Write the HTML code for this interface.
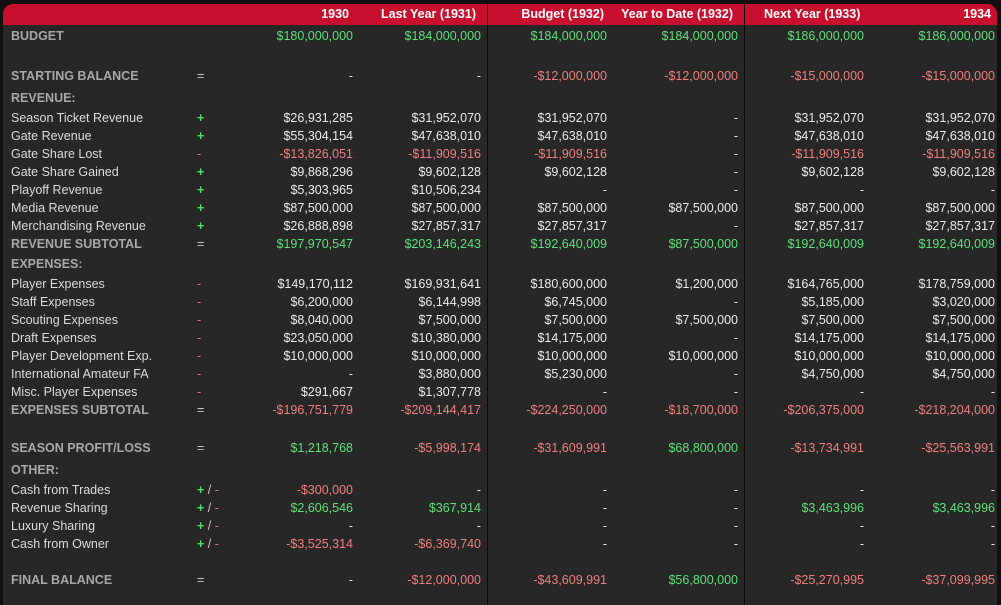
<!DOCTYPE html>
<html><head><meta charset="utf-8"><style>
body{margin:0;width:1001px;height:605px;background:#111;overflow:hidden;font-family:"Liberation Sans",Arial,sans-serif;font-size:12.5px;}
#p{position:absolute;left:3px;top:4px;width:994px;height:601px;background:#272727;border-radius:10px 10px 0 0;overflow:hidden}
#h{position:absolute;left:0;top:0;width:994px;height:21px;background:#c8102e}
.vl{position:absolute;top:0;width:1px;height:601px;background:#0a0a0a}
.r{position:absolute;left:0;width:994px;height:16px;line-height:16px;margin-top:1px}
.r span{position:absolute;white-space:nowrap}
.l{left:8px;color:#dcdcdc}
.b{font-weight:bold;color:#a8a8a8}
.s{left:194px;color:#ccc}
.s .p{position:static;color:#4fe06a;font-weight:bold}
.s .m{position:static;color:#e07a7a}
.c1,.c2,.c3,.c4,.c5,.c6{text-align:right;color:#ececec}
.c1{right:644px}.c2{right:516px}.c3{right:390px}.c4{right:259px}.c5{right:133px}.c6{right:2px}
.g{color:#5ee07a!important}.x{color:#f07e7e!important}
.hd{color:#fff!important;font-weight:bold;font-size:12.5px}
</style></head><body><div id="p">
<div id="h"></div>
<div class="vl" style="left:484px"></div><div class="vl" style="left:741px"></div>
<div class="r" style="top:1px"><span class="c1 hd" style="right:648px">1930</span><span class="c2 hd" style="right:521px">Last Year (1931)</span><span class="c3 hd" style="right:393px">Budget (1932)</span><span class="c4 hd" style="right:264px">Year to Date (1932)</span><span class="hd" style="left:761px;color:#fff">Next Year (1933)</span><span class="c6 hd" style="right:6px">1934</span></div>

<div class="r" style="top:23px"><span class="l b">BUDGET</span><span class="c1 g">$180,000,000</span><span class="c2 g">$184,000,000</span><span class="c3 g">$184,000,000</span><span class="c4 g">$184,000,000</span><span class="c5 g">$186,000,000</span><span class="c6 g">$186,000,000</span></div>
<div class="r" style="top:63px"><span class="l b">STARTING BALANCE</span><span class="s">=</span><span class="c1">-</span><span class="c2">-</span><span class="c3 x">-$12,000,000</span><span class="c4 x">-$12,000,000</span><span class="c5 x">-$15,000,000</span><span class="c6 x">-$15,000,000</span></div>
<div class="r" style="top:85px"><span class="l b">REVENUE:</span></div>
<div class="r" style="top:105px"><span class="l">Season Ticket Revenue</span><span class="s"><span class="p">+</span></span><span class="c1">$26,931,285</span><span class="c2">$31,952,070</span><span class="c3">$31,952,070</span><span class="c4">-</span><span class="c5">$31,952,070</span><span class="c6">$31,952,070</span></div>
<div class="r" style="top:123px"><span class="l">Gate Revenue</span><span class="s"><span class="p">+</span></span><span class="c1">$55,304,154</span><span class="c2">$47,638,010</span><span class="c3">$47,638,010</span><span class="c4">-</span><span class="c5">$47,638,010</span><span class="c6">$47,638,010</span></div>
<div class="r" style="top:141px"><span class="l">Gate Share Lost</span><span class="s"><span class="m">-</span></span><span class="c1 x">-$13,826,051</span><span class="c2 x">-$11,909,516</span><span class="c3 x">-$11,909,516</span><span class="c4">-</span><span class="c5 x">-$11,909,516</span><span class="c6 x">-$11,909,516</span></div>
<div class="r" style="top:159px"><span class="l">Gate Share Gained</span><span class="s"><span class="p">+</span></span><span class="c1">$9,868,296</span><span class="c2">$9,602,128</span><span class="c3">$9,602,128</span><span class="c4">-</span><span class="c5">$9,602,128</span><span class="c6">$9,602,128</span></div>
<div class="r" style="top:177px"><span class="l">Playoff Revenue</span><span class="s"><span class="p">+</span></span><span class="c1">$5,303,965</span><span class="c2">$10,506,234</span><span class="c3">-</span><span class="c4">-</span><span class="c5">-</span><span class="c6">-</span></div>
<div class="r" style="top:195px"><span class="l">Media Revenue</span><span class="s"><span class="p">+</span></span><span class="c1">$87,500,000</span><span class="c2">$87,500,000</span><span class="c3">$87,500,000</span><span class="c4">$87,500,000</span><span class="c5">$87,500,000</span><span class="c6">$87,500,000</span></div>
<div class="r" style="top:213px"><span class="l">Merchandising Revenue</span><span class="s"><span class="p">+</span></span><span class="c1">$26,888,898</span><span class="c2">$27,857,317</span><span class="c3">$27,857,317</span><span class="c4">-</span><span class="c5">$27,857,317</span><span class="c6">$27,857,317</span></div>
<div class="r" style="top:231px"><span class="l b">REVENUE SUBTOTAL</span><span class="s">=</span><span class="c1 g">$197,970,547</span><span class="c2 g">$203,146,243</span><span class="c3 g">$192,640,009</span><span class="c4 g">$87,500,000</span><span class="c5 g">$192,640,009</span><span class="c6 g">$192,640,009</span></div>
<div class="r" style="top:251px"><span class="l b">EXPENSES:</span></div>
<div class="r" style="top:271px"><span class="l">Player Expenses</span><span class="s"><span class="m">-</span></span><span class="c1">$149,170,112</span><span class="c2">$169,931,641</span><span class="c3">$180,600,000</span><span class="c4">$1,200,000</span><span class="c5">$164,765,000</span><span class="c6">$178,759,000</span></div>
<div class="r" style="top:289px"><span class="l">Staff Expenses</span><span class="s"><span class="m">-</span></span><span class="c1">$6,200,000</span><span class="c2">$6,144,998</span><span class="c3">$6,745,000</span><span class="c4">-</span><span class="c5">$5,185,000</span><span class="c6">$3,020,000</span></div>
<div class="r" style="top:307px"><span class="l">Scouting Expenses</span><span class="s"><span class="m">-</span></span><span class="c1">$8,040,000</span><span class="c2">$7,500,000</span><span class="c3">$7,500,000</span><span class="c4">$7,500,000</span><span class="c5">$7,500,000</span><span class="c6">$7,500,000</span></div>
<div class="r" style="top:325px"><span class="l">Draft Expenses</span><span class="s"><span class="m">-</span></span><span class="c1">$23,050,000</span><span class="c2">$10,380,000</span><span class="c3">$14,175,000</span><span class="c4">-</span><span class="c5">$14,175,000</span><span class="c6">$14,175,000</span></div>
<div class="r" style="top:343px"><span class="l">Player Development Exp.</span><span class="s"><span class="m">-</span></span><span class="c1">$10,000,000</span><span class="c2">$10,000,000</span><span class="c3">$10,000,000</span><span class="c4">$10,000,000</span><span class="c5">$10,000,000</span><span class="c6">$10,000,000</span></div>
<div class="r" style="top:361px"><span class="l">International Amateur FA</span><span class="s"><span class="m">-</span></span><span class="c1">-</span><span class="c2">$3,880,000</span><span class="c3">$5,230,000</span><span class="c4">-</span><span class="c5">$4,750,000</span><span class="c6">$4,750,000</span></div>
<div class="r" style="top:379px"><span class="l">Misc. Player Expenses</span><span class="s"><span class="m">-</span></span><span class="c1">$291,667</span><span class="c2">$1,307,778</span><span class="c3">-</span><span class="c4">-</span><span class="c5">-</span><span class="c6">-</span></div>
<div class="r" style="top:397px"><span class="l b">EXPENSES SUBTOTAL</span><span class="s">=</span><span class="c1 x">-$196,751,779</span><span class="c2 x">-$209,144,417</span><span class="c3 x">-$224,250,000</span><span class="c4 x">-$18,700,000</span><span class="c5 x">-$206,375,000</span><span class="c6 x">-$218,204,000</span></div>
<div class="r" style="top:435px"><span class="l b">SEASON PROFIT/LOSS</span><span class="s">=</span><span class="c1 g">$1,218,768</span><span class="c2 x">-$5,998,174</span><span class="c3 x">-$31,609,991</span><span class="c4 g">$68,800,000</span><span class="c5 x">-$13,734,991</span><span class="c6 x">-$25,563,991</span></div>
<div class="r" style="top:457px"><span class="l b">OTHER:</span></div>
<div class="r" style="top:477px"><span class="l">Cash from Trades</span><span class="s"><span class="p">+</span> / <span class="m">-</span></span><span class="c1 x">-$300,000</span><span class="c2">-</span><span class="c3">-</span><span class="c4">-</span><span class="c5">-</span><span class="c6">-</span></div>
<div class="r" style="top:495px"><span class="l">Revenue Sharing</span><span class="s"><span class="p">+</span> / <span class="m">-</span></span><span class="c1 g">$2,606,546</span><span class="c2 g">$367,914</span><span class="c3">-</span><span class="c4">-</span><span class="c5 g">$3,463,996</span><span class="c6 g">$3,463,996</span></div>
<div class="r" style="top:513px"><span class="l">Luxury Sharing</span><span class="s"><span class="p">+</span> / <span class="m">-</span></span><span class="c1">-</span><span class="c2">-</span><span class="c3">-</span><span class="c4">-</span><span class="c5">-</span><span class="c6">-</span></div>
<div class="r" style="top:531px"><span class="l">Cash from Owner</span><span class="s"><span class="p">+</span> / <span class="m">-</span></span><span class="c1 x">-$3,525,314</span><span class="c2 x">-$6,369,740</span><span class="c3">-</span><span class="c4">-</span><span class="c5">-</span><span class="c6">-</span></div>
<div class="r" style="top:567px"><span class="l b">FINAL BALANCE</span><span class="s">=</span><span class="c1">-</span><span class="c2 x">-$12,000,000</span><span class="c3 x">-$43,609,991</span><span class="c4 g">$56,800,000</span><span class="c5 x">-$25,270,995</span><span class="c6 x">-$37,099,995</span></div>
</div></body></html>
